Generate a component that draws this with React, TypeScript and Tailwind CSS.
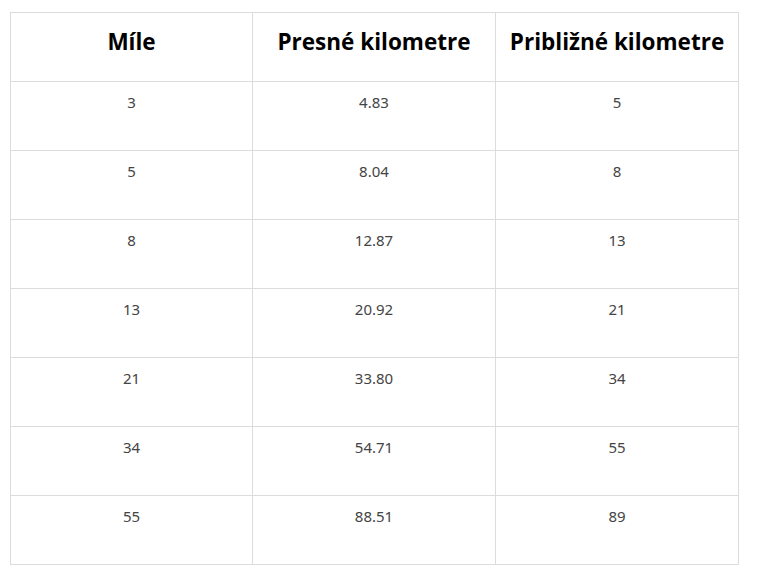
import React from "react";

const rows: [string, string, string][] = [
  ["3", "4.83", "5"],
  ["5", "8.04", "8"],
  ["8", "12.87", "13"],
  ["13", "20.92", "21"],
  ["21", "33.80", "34"],
  ["34", "54.71", "55"],
  ["55", "88.51", "89"],
];

export default function App() {
  return (
    <div className="w-[760px] h-[580px] bg-white pt-[12px] pl-[10px]">
      <div className="grid grid-cols-[242px_243px_243px] w-[729px] border-r border-b border-[#dcdcdc]">
        {["Míle", "Presné kilometre", "Približné kilometre"].map((h) => (
          <div
            key={h}
            className="h-[69px] border-l border-t border-[#dcdcdc] pt-[14px] text-center text-[22.5px] leading-[30px] font-bold text-black"
            style={{ fontFamily: "'Open Sans', sans-serif" }}
          >
            {h}
          </div>
        ))}
        {rows.map((r, i) =>
          r.map((c, j) => (
            <div
              key={`${i}-${j}`}
              className="h-[69px] border-l border-t border-[#dcdcdc] pt-[10px] text-center text-[15px] leading-[20px] text-[#444]"
              style={{ fontFamily: "'Noto Sans', sans-serif" }}
            >
              {c}
            </div>
          ))
        )}
      </div>
    </div>
  );
}
